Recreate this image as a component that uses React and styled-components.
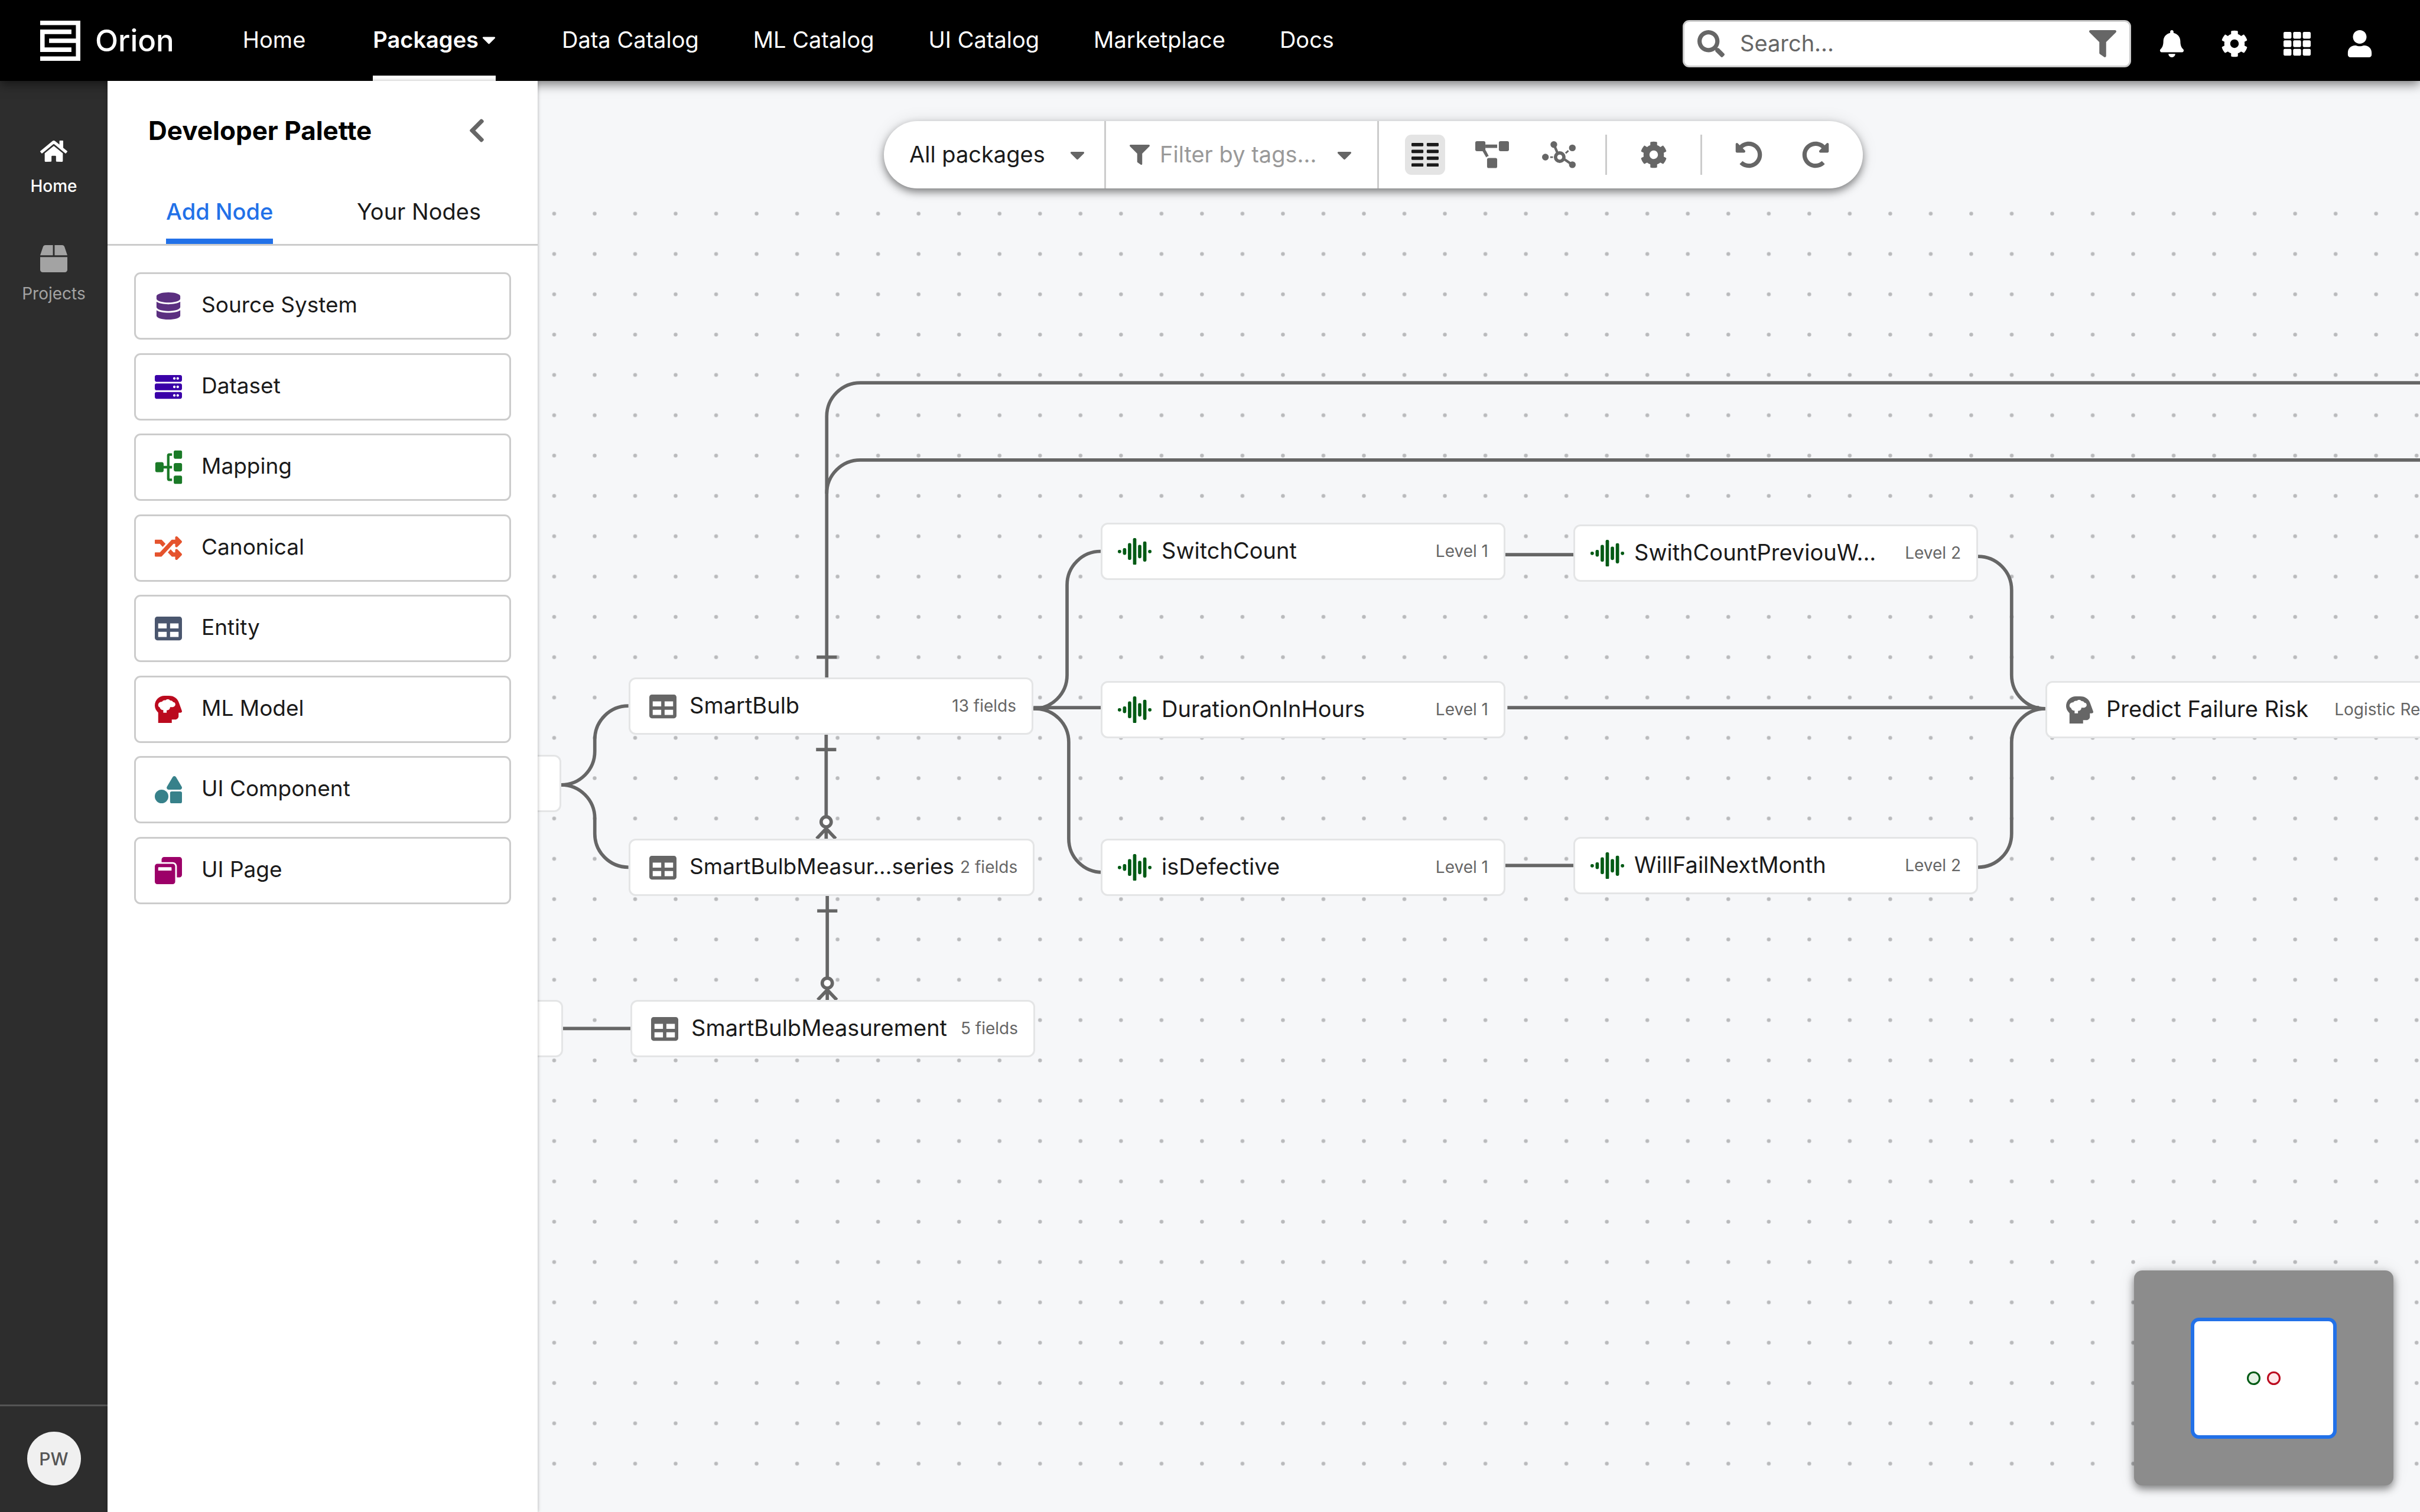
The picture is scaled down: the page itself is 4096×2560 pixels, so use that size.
import React from 'react';
import styled, { createGlobalStyle } from 'styled-components';
import {
    FaBell, FaBox, FaCaretDown, FaChevronLeft, FaCog, FaDatabase, FaFilter, FaHome, FaRandom,
    FaRedoAlt, FaSearch, FaServer, FaShapes, FaSitemap, FaTable, FaTh, FaUndoAlt, FaUser, FaWindowRestore
} from 'react-icons/fa';

const navLinks = ['Data Catalog', 'ML Catalog', 'UI Catalog', 'Marketplace', 'Docs'];

const paletteItems = [
    { label: 'Source System', icon: FaDatabase, color: '#5b2f80' },
    { label: 'Dataset', icon: FaServer, color: '#3a00a8' },
    { label: 'Mapping', icon: MappingIcon, color: '#1a7a27' },
    { label: 'Canonical', icon: FaRandom, color: '#e5532d' },
    { label: 'Entity', icon: FaTable, color: '#4a566e' },
    { label: 'ML Model', icon: HeadIcon, color: '#bb0a1e' },
    { label: 'UI Component', icon: FaShapes, color: '#37818a' },
    { label: 'UI Page', icon: FaWindowRestore, color: '#9c0068' }
];

const nodes = [
    { id: 'left-1', x: -645, y: 1141 },
    { id: 'left-2', x: -642, y: 1556 },
    { id: 'bulb', x: 154, y: 1010, type: 'entity', name: 'SmartBulb', meta: '13 fields' },
    { id: 'series', x: 154, y: 1283, type: 'entity', name: 'SmartBulbMeasur...series', meta: '2 fields', compact: true },
    { id: 'measurement', x: 157, y: 1556, type: 'entity', name: 'SmartBulbMeasurement', meta: '5 fields' },
    { id: 'switch', x: 953, y: 748, type: 'feature', name: 'SwitchCount', meta: 'Level 1' },
    { id: 'duration', x: 953, y: 1016, type: 'feature', name: 'DurationOnInHours', meta: 'Level 1' },
    { id: 'defective', x: 953, y: 1283, type: 'feature', name: 'isDefective', meta: 'Level 1' },
    { id: 'previous', x: 1753, y: 751, type: 'feature', name: 'SwithCountPreviouW...', meta: 'Level 2' },
    { id: 'month', x: 1753, y: 1280, type: 'feature', name: 'WillFailNextMonth', meta: 'Level 2' },
    { id: 'predict', x: 2552, y: 1016, type: 'model', name: 'Predict Failure Risk', meta: 'Logistic Regression' }
];

const nodeIcons = {
    entity: <FaTable />,
    feature: <WaveIcon />,
    model: <HeadIcon />
};

export default function App() {
    return (
        <>
            <GlobalStyle />
            <Page>
                <Header />
                <Body>
                    <SideNav />
                    <Palette />
                    <Canvas>
                        <Graph />
                        <Toolbar />
                        {nodes.map(node => <Node key={node.id} node={node} />)}
                        <MiniMap />
                    </Canvas>
                </Body>
            </Page>
        </>
    );
}

function Header() {
    return (
        <HeaderBar>
            <Brand href="#">
                <Logo />
                Orion
            </Brand>
            <MainNav>
                <NavLink href="#">Home</NavLink>
                <NavLink href="#" $active>Packages <FaCaretDown /></NavLink>
                {navLinks.map(label => <NavLink key={label} href="#">{label}</NavLink>)}
            </MainNav>
            <HeaderTools>
                <SearchBox>
                    <FaSearch />
                    <input type="text" aria-label="Search" placeholder="Search..." />
                    <FaFilter />
                </SearchBox>
                <HeaderActions>
                    <HeaderButton aria-label="Notifications"><FaBell /></HeaderButton>
                    <HeaderButton aria-label="Settings"><FaCog /></HeaderButton>
                    <HeaderButton aria-label="Apps"><FaTh /></HeaderButton>
                    <HeaderButton aria-label="Account"><FaUser /></HeaderButton>
                </HeaderActions>
            </HeaderTools>
        </HeaderBar>
    );
}

function SideNav() {
    return (
        <SideBar>
            <SideLinks>
                <SideLink href="#" $active><FaHome />Home</SideLink>
                <SideLink href="#"><FaBox />Projects</SideLink>
            </SideLinks>
            <SideFooter>
                <Avatar>PW</Avatar>
            </SideFooter>
        </SideBar>
    );
}

function Palette() {
    return (
        <PalettePanel>
            <PaletteHead>
                <h2>Developer Palette</h2>
                <button type="button" aria-label="Collapse palette"><FaChevronLeft /></button>
            </PaletteHead>
            <Tabs role="tablist">
                <Tab role="tab" aria-selected="true" $active>Add Node</Tab>
                <Tab role="tab" aria-selected="false">Your Nodes</Tab>
            </Tabs>
            <CardList>
                {paletteItems.map(({ label, icon: Icon, color }) => (
                    <Card key={label} type="button" $color={color}>
                        <CardIcon><Icon /></CardIcon>
                        <CardLabel>{label}</CardLabel>
                    </Card>
                ))}
            </CardList>
        </PalettePanel>
    );
}

function Toolbar() {
    return (
        <ToolbarRow>
            <ToolbarPill>
                <PackageField>
                    <select aria-label="Packages" defaultValue="all">
                        <option value="all">All packages</option>
                    </select>
                    <FaCaretDown />
                </PackageField>
                <TagField>
                    <FaFilter />
                    <select aria-label="Filter by tags" defaultValue="">
                        <option value="">Filter by tags...</option>
                    </select>
                    <FaCaretDown />
                </TagField>
                <Tools>
                    <ToolButton aria-label="Columns view" $active><ColumnsIcon /></ToolButton>
                    <ToolButton aria-label="Tree view"><TreeIcon /></ToolButton>
                    <ToolButton aria-label="Network view"><HubIcon /></ToolButton>
                    <ToolDivider />
                    <ToolButton aria-label="Canvas settings"><FaCog /></ToolButton>
                    <ToolDivider />
                    <ToolButton aria-label="Undo"><FaUndoAlt /></ToolButton>
                    <ToolButton aria-label="Redo"><FaRedoAlt /></ToolButton>
                </Tools>
            </ToolbarPill>
        </ToolbarRow>
    );
}

function Node({ node }) {
    return (
        <NodeBox $x={node.x} $y={node.y}>
            <NodeIcon $type={node.type}>{nodeIcons[node.type]}</NodeIcon>
            <NodeName $compact={node.compact}>{node.name}</NodeName>
            <NodeMeta $type={node.type}>{node.meta}</NodeMeta>
        </NodeBox>
    );
}

function MiniMap() {
    return (
        <MiniMapBox>
            <MiniMapView>
                <MiniMapDot $border="#005a14" $fill="#e4f2e4" />
                <MiniMapDot $border="#bb0a1e" $fill="#ffe8ea" />
            </MiniMapView>
        </MiniMapBox>
    );
}

// dot grid and the edges between nodes
function Graph() {
    return (
        <GraphSvg viewBox="0 0 3360 2556" preserveAspectRatio="xMinYMin slice" aria-hidden="true">
            <defs>
                <pattern id="dots" x="-6.6" y="201" width="72.27" height="72" patternUnits="userSpaceOnUse">
                    <circle cx="36.1" cy="36" r="3.4" fill="#b9babc" />
                </pattern>
            </defs>
            <rect x="0" y="201" width="3360" height="2304" fill="url(#dots)" />
            <g fill="none" stroke="#666" strokeWidth="6">
                <path d="M516 1068V599a60 60 0 0 1 60-60H3360" />
                <path d="M516 737a60 60 0 0 1 60-60H3360" />
                <path d="M498 1029h36" />
                <path d="M42 1257a60 60 0 0 0 60-60V1176a60 60 0 0 1 60-60" />
                <path d="M42 1257a60 60 0 0 1 60 60V1344a60 60 0 0 0 60 60" />
                <path d="M44 1692H168" />
                <path d="M885 1121a60 60 0 0 0 60-60V900a60 60 0 0 1 60-60" />
                <path d="M885 1121h3a60 60 0 0 1 60 60V1353a60 60 0 0 0 60 60" />
                <path d="M885 1119H1008" />
                <path d="M1726 846H1850" />
                <path d="M1731 1119H2680" />
                <path d="M1726 1401H1850" />
                <path d="M2571 849a60 60 0 0 1 60 60V1061a60 60 0 0 0 60 60" />
                <path d="M2571 1404a60 60 0 0 0 60-60V1181a60 60 0 0 1 60-60" />
                <Relation x={515} y={1167} />
                <Relation x={517} y={1455} />
            </g>
        </GraphSvg>
    );
}

// one-to-many link, crow's foot at the lower end
function Relation({ x, y }) {
    return (
        <g transform={`translate(${x} ${y})`}>
            <path d="M0-2V148M-18 27h36M0 166V188M0 168L-17 186M0 168L17 186" />
            <circle cx="0" cy="156" r="9" fill="#fff" />
        </g>
    );
}

function Logo() {
    return (
        <svg viewBox="0 0 72 72" fill="currentColor">
            <path d="M0 0h72v72H0v-8h64V40H16v-8h48V8H0z" />
            <path d="M0 16h56v8H8v24h48v8H0z" />
        </svg>
    );
}

function MappingIcon() {
    return <FaSitemap transform="rotate(-90)" />;
}

function HeadIcon() {
    return (
        <svg viewBox="0 0 144 144" width="1em" height="1em" fill="currentColor">
            <path
                fillRule="evenodd"
                d="M18 144V89C7 78 0 67 0 52 0 22 23 0 52 0h22c29 0 48 15 55 40l14 38c3 7-1 12-7 12h-10v18c0 10-8 18-18 18H90v18zM45 90h18V77c11 0 18-7 18-17h10c10 0 18-6 18-14 0-7-5-12-12-12-2-6-9-10-16-9-5-8-19-8-24-1-8-2-16 2-19 8-10-1-20 6-20 17 0 6 3 10 8 12 2 9 9 15 19 15z"
            />
        </svg>
    );
}

function WaveIcon() {
    const heights = [6, 12, 30, 48, 24, 36, 6];
    return (
        <svg viewBox="0 0 60 48" fill="currentColor">
            {heights.map((h, i) => (
                <rect key={i} x={i * 9} y={24 - h / 2} width="6" height={h} rx="2.5" />
            ))}
        </svg>
    );
}

function ColumnsIcon() {
    return (
        <svg viewBox="0 0 48 42" fill="currentColor">
            {[0, 12, 24, 36].map(y => (
                <React.Fragment key={y}>
                    <rect x="0" y={y} width="21" height="6" rx="1.5" />
                    <rect x="27" y={y} width="21" height="6" rx="1.5" />
                </React.Fragment>
            ))}
        </svg>
    );
}

function TreeIcon() {
    return (
        <svg viewBox="0 0 60 48" fill="currentColor">
            <rect x="0" y="0" width="18" height="18" rx="3" />
            <rect x="42" y="0" width="18" height="18" rx="3" />
            <rect x="21" y="30" width="18" height="18" rx="3" />
            <path d="M18 6h21v6H18zM12 16h6.5l5.5 10.5c-2 0-3.5 1-4.5 2.5z" />
        </svg>
    );
}

function HubIcon() {
    return (
        <svg viewBox="0 0 60 48" fill="currentColor">
            <circle cx="21" cy="6" r="6" />
            <circle cx="54" cy="12" r="6" />
            <circle cx="6" cy="28.5" r="6" />
            <circle cx="54" cy="42" r="6" />
            <g fill="none" stroke="currentColor">
                <circle cx="31.5" cy="28.5" r="7.5" strokeWidth="6" />
                <path d="M21 6l7 16M54 42L38 31" strokeWidth="4.5" />
                <path d="M14.5 28.5h5M42 21.5l5-4.5" strokeWidth="3" />
            </g>
        </svg>
    );
}

const GlobalStyle = createGlobalStyle`
    * {
        box-sizing: border-box;
    }
    body {
        margin: 0;
        font-family: Inter, "Noto Sans", sans-serif;
        font-size: 38px;
        line-height: 48px;
        color: #1a1a1a;
    }
    button, input, select {
        font: inherit;
        color: inherit;
        border: 0;
        padding: 0;
        margin: 0;
        background: none;
    }
    select {
        appearance: none;
    }
    a {
        color: inherit;
        text-decoration: none;
    }
    svg {
        display: block;
        flex: none;
    }
`

const Page = styled.div`
    min-height: 100vh;
    display: flex;
    flex-direction: column;
`

const HeaderBar = styled.header`
    position: relative;
    z-index: 1;
    height: 137px;
    flex: none;
    display: flex;
    align-items: center;
    padding: 0 49px 0 68px;
    background: #000;
    color: #fff;
    box-shadow: 0 6px 17px rgba(0,0,0,0.5);
`

const Brand = styled.a`
    display: flex;
    align-items: center;
    gap: 25px;
    font-size: 51px;
    font-weight: 500;
    margin-right: 116px;
    svg {
        width: 68px;
        height: 68px;
    }
`

const MainNav = styled.nav`
    flex: 1;
    align-self: stretch;
    display: flex;
    gap: 92px;
`

const NavLink = styled.a`
    display: flex;
    align-items: center;
    gap: 6px;
    white-space: nowrap;
    font-weight: ${props => props.$active ? 600 : 400};
    margin: ${props => props.$active ? '0 20px 0 22px' : 0};
    border-top: 5px solid transparent;
    border-bottom: 9px solid ${props => props.$active ? '#fff' : 'transparent'};
    svg {
        width: 23px;
    }
`

const HeaderTools = styled.div`
    display: flex;
    align-items: center;
    gap: 16px;
    padding-top: 11px;
`

const SearchBox = styled.label`
    width: 759px;
    height: 80px;
    display: flex;
    align-items: center;
    gap: 26px;
    padding: 0 22px;
    border: 3px solid #ccc;
    border-radius: 11px;
    background: #fff;
    color: #666;
    input {
        flex: 1;
        min-width: 0;
        outline: 0;
        padding-bottom: 3px;
    }
    input::placeholder {
        color: #666;
        opacity: 1;
    }
    svg {
        width: 46px;
        height: 46px;
    }
`

const HeaderActions = styled.div`
    display: flex;
`

const HeaderButton = styled.button`
    width: 106px;
    height: 80px;
    display: grid;
    place-items: center;
    font-size: 46px;
`

const Body = styled.div`
    flex: 1;
    display: flex;
`

const SideBar = styled.aside`
    width: 182px;
    flex: none;
    display: flex;
    flex-direction: column;
    justify-content: space-between;
    background: #2d2d2d;
`

const SideLinks = styled.nav`
    display: flex;
    flex-direction: column;
    gap: 83px;
    padding-top: 96px;
`

const SideLink = styled.a`
    display: flex;
    flex-direction: column;
    align-items: center;
    gap: 19px;
    font-size: 28px;
    line-height: 34px;
    font-weight: ${props => props.$active ? 500 : 400};
    color: ${props => props.$active ? '#fff' : '#a3a3a3'};
    svg {
        width: auto;
        height: 46px;
    }
`

const SideFooter = styled.div`
    display: flex;
    justify-content: center;
    padding: 43px 0 45px;
    border-top: 3px solid #555;
`

const Avatar = styled.div`
    width: 91px;
    height: 91px;
    display: grid;
    place-items: center;
    border-radius: 50%;
    background: #f0f0f0;
    color: #555;
    font-size: 30px;
    font-weight: 500;
`

const PalettePanel = styled.section`
    position: relative;
    z-index: 2;
    width: 728px;
    flex: none;
    background: #fff;
    box-shadow: 0 0 6px rgba(0,0,0,0.3);
`

const PaletteHead = styled.div`
    display: flex;
    align-items: center;
    justify-content: space-between;
    padding: 52px 80px 0 69px;
    h2 {
        margin: 0;
        font-size: 44px;
        line-height: 64px;
        font-weight: 700;
        color: #000;
    }
    button {
        font-size: 46px;
        color: #666;
    }
`

const Tabs = styled.div`
    display: flex;
    justify-content: space-between;
    padding: 50px 96px 0 99px;
    border-bottom: 3px solid #ccc;
`

const Tab = styled.button`
    height: 110px;
    border-top: 8px solid transparent;
    border-bottom: 9px solid ${props => props.$active ? '#2271e8' : 'transparent'};
    font-weight: ${props => props.$active ? 500 : 400};
    color: ${props => props.$active ? '#2271e8' : '#1a1a1a'};
`

const CardList = styled.div`
    height: 1070px;
    margin: 45px;
    display: flex;
    flex-direction: column;
    justify-content: space-between;
`

const Card = styled.button`
    height: 114px;
    display: flex;
    align-items: center;
    gap: 33px;
    padding: 0 32px;
    border: 3px solid #ccc;
    border-radius: 11px;
    text-align: left;
    svg {
        color: ${props => props.$color};
    }
`

const CardIcon = styled.span`
    width: 46px;
    display: flex;
    justify-content: center;
    font-size: 46px;
    svg[transform] {
        width: 57px;
    }
`

const CardLabel = styled.span`
    padding-bottom: 4px;
    font-size: 37px;
`

const Canvas = styled.main`
    position: relative;
    flex: 1;
    min-width: 0;
    overflow: hidden;
    background: #f6f7f9;
`

const GraphSvg = styled.svg`
    position: absolute;
    inset: 0;
    width: 100%;
    height: 100%;
`

const ToolbarRow = styled.div`
    position: relative;
    display: flex;
    padding: 68px 0 0 586px;
`

const ToolbarPill = styled.div`
    height: 114px;
    display: flex;
    align-items: stretch;
    border-radius: 57px;
    background: #fff;
    box-shadow: 0 6px 14px rgba(0,0,0,0.45), 0 0 28px rgba(0,0,0,0.1);
`

const Field = styled.label`
    display: flex;
    align-items: center;
    border-right: 3px solid #ccc;
    color: #666;
    svg {
        width: 34px;
        height: 34px;
    }
    svg:last-child {
        width: 25px;
        height: 40px;
    }
    select {
        flex: 1;
        padding-bottom: 3px;
    }
`

const PackageField = styled(Field)`
    width: 376px;
    padding: 0 33px 0 43px;
    select {
        color: #1a1a1a;
    }
`

const TagField = styled(Field)`
    width: 462px;
    padding: 0 43px 0 40px;
    gap: 17px;
    select {
        color: #999;
    }
`

const Tools = styled.div`
    display: flex;
    align-items: center;
    gap: 45px;
    padding: 0 46px 0 44px;
`

const ToolButton = styled.button`
    width: 68px;
    height: 68px;
    display: grid;
    place-items: center;
    border-radius: 11px;
    font-size: 46px;
    color: ${props => props.$active ? '#1a1a1a' : '#666'};
    background: ${props => props.$active ? '#e4e4e4' : 'none'};
    svg[viewBox^="0 0 60"] {
        width: 57px;
    }
    svg[viewBox^="0 0 48"] {
        width: 46px;
    }
`

const ToolDivider = styled.span`
    width: 3px;
    height: 68px;
    background: #ccc;
`

const NodeBox = styled.div`
    position: absolute;
    left: ${props => props.$x}px;
    top: ${props => props.$y}px;
    min-width: 685px;
    height: 97px;
    display: flex;
    align-items: center;
    padding: 0 26px;
    border: 3px solid #e4e5e6;
    border-radius: 12px;
    background: #fff;
    white-space: nowrap;
`

const NodeIcon = styled.span`
    width: 57px;
    display: flex;
    justify-content: center;
    font-size: 46px;
    margin-right: 17px;
    color: ${props => props.$type === 'feature' ? '#005a14' : '#666'};
    svg[viewBox^="0 0 60"] {
        width: 57px;
    }
`

const NodeName = styled.span`
    flex: 1;
    padding-bottom: 4px;
    font-size: ${props => props.$compact ? 37 : 38}px;
`

const NodeMeta = styled.span`
    padding-bottom: 2px;
    margin-left: ${props => props.$type === 'model' ? 44 : 10}px;
    font-size: 28px;
    color: #666;
`

const MiniMapBox = styled.div`
    position: absolute;
    right: 45px;
    bottom: 45px;
    width: 439px;
    height: 364px;
    display: grid;
    place-items: center;
    border-radius: 14px;
    background: #8c8c8c;
    box-shadow: 0 6px 14px rgba(0,0,0,0.45), 0 0 28px rgba(0,0,0,0.1);
`

const MiniMapView = styled.div`
    width: 247px;
    height: 205px;
    display: flex;
    align-items: center;
    justify-content: center;
    gap: 11px;
    border: 6px solid #2271e8;
    border-radius: 14px;
    background: #fff;
`

const MiniMapDot = styled.span`
    width: 23px;
    height: 23px;
    border-radius: 50%;
    border: 3px solid ${props => props.$border};
    background: ${props => props.$fill};
`
